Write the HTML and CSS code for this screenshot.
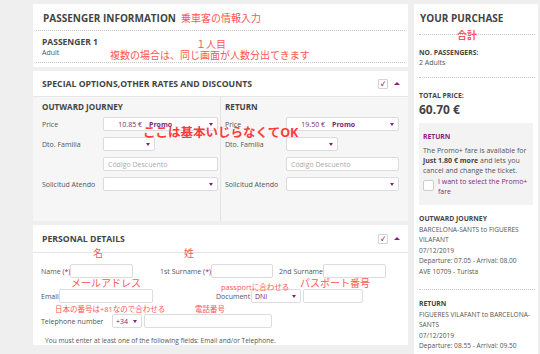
FILE: index.html
```html
<!DOCTYPE html>
<html lang="ja">
<head>
    <meta charset="UTF-8"/>
    <title>Passenger information</title>
    <link rel="stylesheet" href="styles.css">
</head>
<body>
<div class="page">
    <main class="main">
        <section class="card">
            <h2 class="card-title dotted">PASSENGER INFORMATION</h2>
            <div class="pax dotted">
                <div class="pax-name">PASSENGER 1</div>
                <div class="pax-type">Adult</div>
            </div>
        </section>

        <section class="card">
            <div class="card-head">
                <h2>SPECIAL OPTIONS,OTHER RATES AND DISCOUNTS</h2>
                <div class="tools"><span class="check-icon">&#10003;</span><span class="up-icon"></span></div>
            </div>
            <div class="journey">
                <div class="journey-col first">
                    <h3>OUTWARD JOURNEY</h3>
                    <div class="row"><span class="lbl">Price</span>
                        <div class="field price"><span class="amount">10.85 €</span><span class="promo">Promo</span><span class="arrow"></span></div>
                    </div>
                    <div class="row"><span class="lbl">Dto. Familia</span>
                        <div class="field small"><span class="arrow"></span></div>
                    </div>
                    <div class="row"><span class="lbl"></span>
                        <div class="field price"><span class="placeholder">Código Descuento</span></div>
                    </div>
                    <div class="row"><span class="lbl">Solicitud Atendo</span>
                        <div class="field price"><span class="arrow"></span></div>
                    </div>
                </div>
                <div class="journey-col">
                    <h3>RETURN</h3>
                    <div class="row"><span class="lbl">Price</span>
                        <div class="field price"><span class="amount">19.50 €</span><span class="promo">Promo</span><span class="arrow"></span></div>
                    </div>
                    <div class="row"><span class="lbl">Dto. Familia</span>
                        <div class="field small"><span class="arrow"></span></div>
                    </div>
                    <div class="row"><span class="lbl"></span>
                        <div class="field price"><span class="placeholder">Código Descuento</span></div>
                    </div>
                    <div class="row"><span class="lbl">Solicitud Atendo</span>
                        <div class="field price"><span class="arrow"></span></div>
                    </div>
                </div>
            </div>
        </section>

        <section class="card personal">
            <div class="card-head">
                <h2>PERSONAL DETAILS</h2>
                <div class="tools"><span class="check-icon">&#10003;</span><span class="up-icon"></span></div>
            </div>
            <div class="form">
                <div class="form-row">
                    <span class="lbl w-l-name">Name <em>(*)</em></span><div class="field w-name"></div>
                    <span class="lbl w-l-sur1">1st Surname <em>(*)</em></span><div class="field w-sur1"></div>
                    <span class="lbl w-l-sur2">2nd Surname</span><div class="field w-name"></div>
                </div>
                <div class="form-row">
                    <span class="lbl w-l-email">Email</span><div class="field w-email"></div>
                    <span class="lbl w-l-doc">Document</span>
                    <div class="field w-doc"><span class="dni">DNI</span><span class="arrow"></span></div>
                    <div class="field w-docnum"></div>
                </div>
                <div class="form-row">
                    <span class="lbl w-l-tel">Telephone number</span>
                    <div class="field w-prefix"><span class="dni">+34</span><span class="arrow"></span></div>
                    <div class="field w-phone"></div>
                </div>
                <p class="hint">You must enter at least one of the following fields: Email and/or Telephone.</p>
            </div>
        </section>

        <span class="note" style="left:148px;top:7px">乗車客の情報入力</span>
        <span class="note" style="left:163px;top:33px">１人目</span>
        <span class="note" style="left:77px;top:44px">複数の場合は、同じ画面が人数分出てきます</span>
        <span class="note big" style="left:110px;top:121px">ここは基本いじらなくてOK</span>
        <span class="note" style="left:60px;top:242px">名</span>
        <span class="note" style="left:151px;top:242px">姓</span>
        <span class="note" style="left:38px;top:272px">メールアドレス</span>
        <span class="note" style="left:267px;top:272px">パスポート番号</span>
        <span class="note tiny" style="left:188px;top:278px">passportに合わせる</span>
        <span class="note tiny" style="left:22px;top:300px">日本の番号は+81なので合わせる</span>
        <span class="note tiny" style="left:162px;top:300px">電話番号</span>
    </main>

    <aside class="card purchase">
        <h2 class="card-title dotted">YOUR PURCHASE</h2>
        <div class="block dotted">
            <div class="label">NO. PASSENGERS:</div>
            <div>2 Adults</div>
        </div>
        <div class="block">
            <div class="label">TOTAL PRICE:</div>
            <div class="total">60.70 €</div>
        </div>
        <div class="promo-box">
            <div class="promo-title">RETURN</div>
            <p>The Promo+ fare is available for <b>just 1.80 € more</b> and lets you cancel and change the ticket.</p>
            <div class="promo-check"><span class="box"></span><span>I want to select the Promo+ fare</span></div>
        </div>
        <div class="trip dotted">
            <div class="label">OUTWARD JOURNEY</div>
            <div>BARCELONA-SANTS to FIGUERES VILAFANT</div>
            <div>07/12/2019</div>
            <div>Departure: 07.05 - Arrival: 08.00</div>
            <div>AVE 10709 - Turista</div>
        </div>
        <div class="trip">
            <div class="label">RETURN</div>
            <div>FIGUERES VILAFANT to BARCELONA-SANTS</div>
            <div>07/12/2019</div>
            <div>Departure: 08.55 - Arrival: 09.50</div>
        </div>
        <span class="note" style="left:43px;top:24px;font-weight:bold">合計</span>
    </aside>
</div>
</body>
</html>
```

FILE: styles.css
```css
body {
    margin: 0;
    height: 354px;
    overflow: hidden;
    background: #efefef;
    font-family: "Open Sans", "Noto Sans CJK JP", sans-serif;
    color: #555;
    font-size: 7px;
}

.page {
    display: flex;
    gap: 6px;
    padding: 4px 0 0 33px;
}

.main {
    width: 375px;
    position: relative;
    display: flex;
    flex-direction: column;
    gap: 4px;
}

.card {
    background: #fff;
}

h2, h3, p {
    margin: 0;
}

.dotted {
    border-bottom: 1px dotted #c8c8c8;
}

.card-title {
    font-size: 10px;
    line-height: 14px;
    font-weight: 700;
    color: #444;
    margin: 0 3px;
    padding: 7px 7px 5px;
}

.pax {
    margin: 0 3px;
    padding: 5px 6px 4px;
}

.card:first-child {
    padding-bottom: 4px;
}

.pax-name {
    font-size: 8.5px;
    line-height: 12px;
    font-weight: 700;
    color: #444;
}

.pax-type {
    font-size: 7px;
    line-height: 10px;
}

.card-head {
    height: 25px;
    display: flex;
    align-items: center;
    justify-content: space-between;
    padding: 0 8px 0 9px;
    border-bottom: 1px solid #e6e6e6;
}

.card-head h2 {
    font-size: 8.7px;
    font-weight: 700;
    color: #444;
}

.personal .card-head {
    height: 27px;
}

.tools {
    display: flex;
    align-items: center;
    gap: 6px;
}

.check-icon {
    width: 8px;
    height: 8px;
    border: 1px solid #d4d4d4;
    border-radius: 1px;
    color: #8b1f80;
    font-size: 6px;
    line-height: 8px;
    text-align: center;
    font-weight: bold;
}

.up-icon {
    width: 0;
    height: 0;
    border-left: 3px solid transparent;
    border-right: 3px solid transparent;
    border-bottom: 3px solid #8b1f80;
}

.journey {
    display: flex;
    background: #f6f6f6;
    height: 124px;
}

.journey-col {
    flex: 1;
    padding: 5px 0 0 4px;
}

.journey-col.first {
    flex: none;
    width: 178px;
    padding-left: 9px;
    border-right: 1px solid #e4e4e4;
}

.journey h3 {
    font-size: 8.1px;
    line-height: 10px;
    font-weight: 700;
    color: #444;
    margin-bottom: 5px;
}

.row {
    display: flex;
    align-items: center;
    margin-bottom: 6px;
}

.row .lbl {
    flex: none;
    width: 61px;
}

.field {
    flex: none;
    box-sizing: border-box;
    height: 14px;
    background: #fff;
    border: 1px solid #dcdcdc;
    border-radius: 2px;
    display: flex;
    align-items: center;
    font-size: 7px;
}

.price {
    width: 115px;
}

.journey-col + .journey-col .price {
    width: 113px;
}

.small {
    width: 52px;
}

.amount {
    flex: none;
    width: 38px;
    text-align: right;
    color: #7d1f74;
}

.promo {
    margin-left: 7px;
    color: #7d1f74;
    font-weight: 700;
}

.arrow {
    margin-left: auto;
    margin-right: 4px;
    width: 0;
    height: 0;
    border-left: 2px solid transparent;
    border-right: 2px solid transparent;
    border-top: 3px solid #8b1f80;
}

.placeholder {
    color: #aaa;
    padding-left: 4px;
}

.form {
    padding: 11px 0 0 8px;
}

.form-row {
    display: flex;
    align-items: center;
    height: 14px;
    margin-bottom: 11px;
}

.form-row em {
    font-style: normal;
    color: #8b1f80;
}

.form-row .lbl {
    flex: none;
    white-space: nowrap;
}

.w-l-name { width: 29px; }
.w-l-sur1 { width: 51px; margin-left: 27px; }
.w-l-sur2 { width: 44px; margin-left: 6px; }
.w-l-email { width: 18px; }
.w-l-doc { width: 35px; margin-left: 63px; }
.w-l-tel { width: 71px; }

.w-name { width: 63px; }
.w-sur1 { width: 62px; }
.w-email { width: 94px; }
.w-doc { width: 50px; }
.w-docnum { width: 60px; margin-left: 2px; }
.w-prefix { width: 30px; }
.w-phone { width: 128px; margin-left: 2px; }

.dni {
    color: #7d1f74;
    padding-left: 3px;
}

.hint {
    padding-left: 4px;
    margin-top: -3px;
    font-size: 6.6px;
}

.purchase {
    width: 116px;
    padding: 0 3px 0 5px;
    position: relative;
    height: 360px;
}

.purchase .card-title {
    margin: 0;
    padding: 7px 1px 9px;
}

.block {
    padding: 13px 0 9px;
    line-height: 10px;
}

.block .label, .trip .label {
    font-weight: 700;
    color: #444;
    font-size: 6.8px;
}

.total {
    font-size: 12px;
    line-height: 14px;
    font-weight: 700;
    color: #444;
    margin-top: 2px;
}

.promo-box {
    margin: -3px 2px 0 0;
    background: #f3f3f3;
    padding: 9px 4px 8px;
    line-height: 10px;
}

.promo-title {
    color: #8b1f80;
    font-weight: 700;
    font-size: 6.8px;
}

.promo-box p {
    margin: 4px 0 1px;
}

.promo-box b {
    color: #444;
}

.promo-check {
    display: flex;
    gap: 4px;
    color: #8b1f80;
}

.box {
    flex: none;
    width: 9px;
    height: 9px;
    margin-top: 3px;
    background: #fff;
    border: 1px solid #ccc;
    border-radius: 2px;
}

.trip {
    padding: 9px 0 12px;
    line-height: 10.5px;
    font-size: 6.6px;
}

.trip + .trip {
    padding-top: 9px;
}

.note {
    position: absolute;
    color: #ff5656;
    font-size: 10px;
    line-height: 14px;
    white-space: nowrap;
}

.note.big {
    font-size: 12.5px;
    line-height: 16px;
    font-weight: 700;
    color: #ff3c3c;
}

.note.tiny {
    font-size: 7.5px;
    line-height: 10px;
}
```
